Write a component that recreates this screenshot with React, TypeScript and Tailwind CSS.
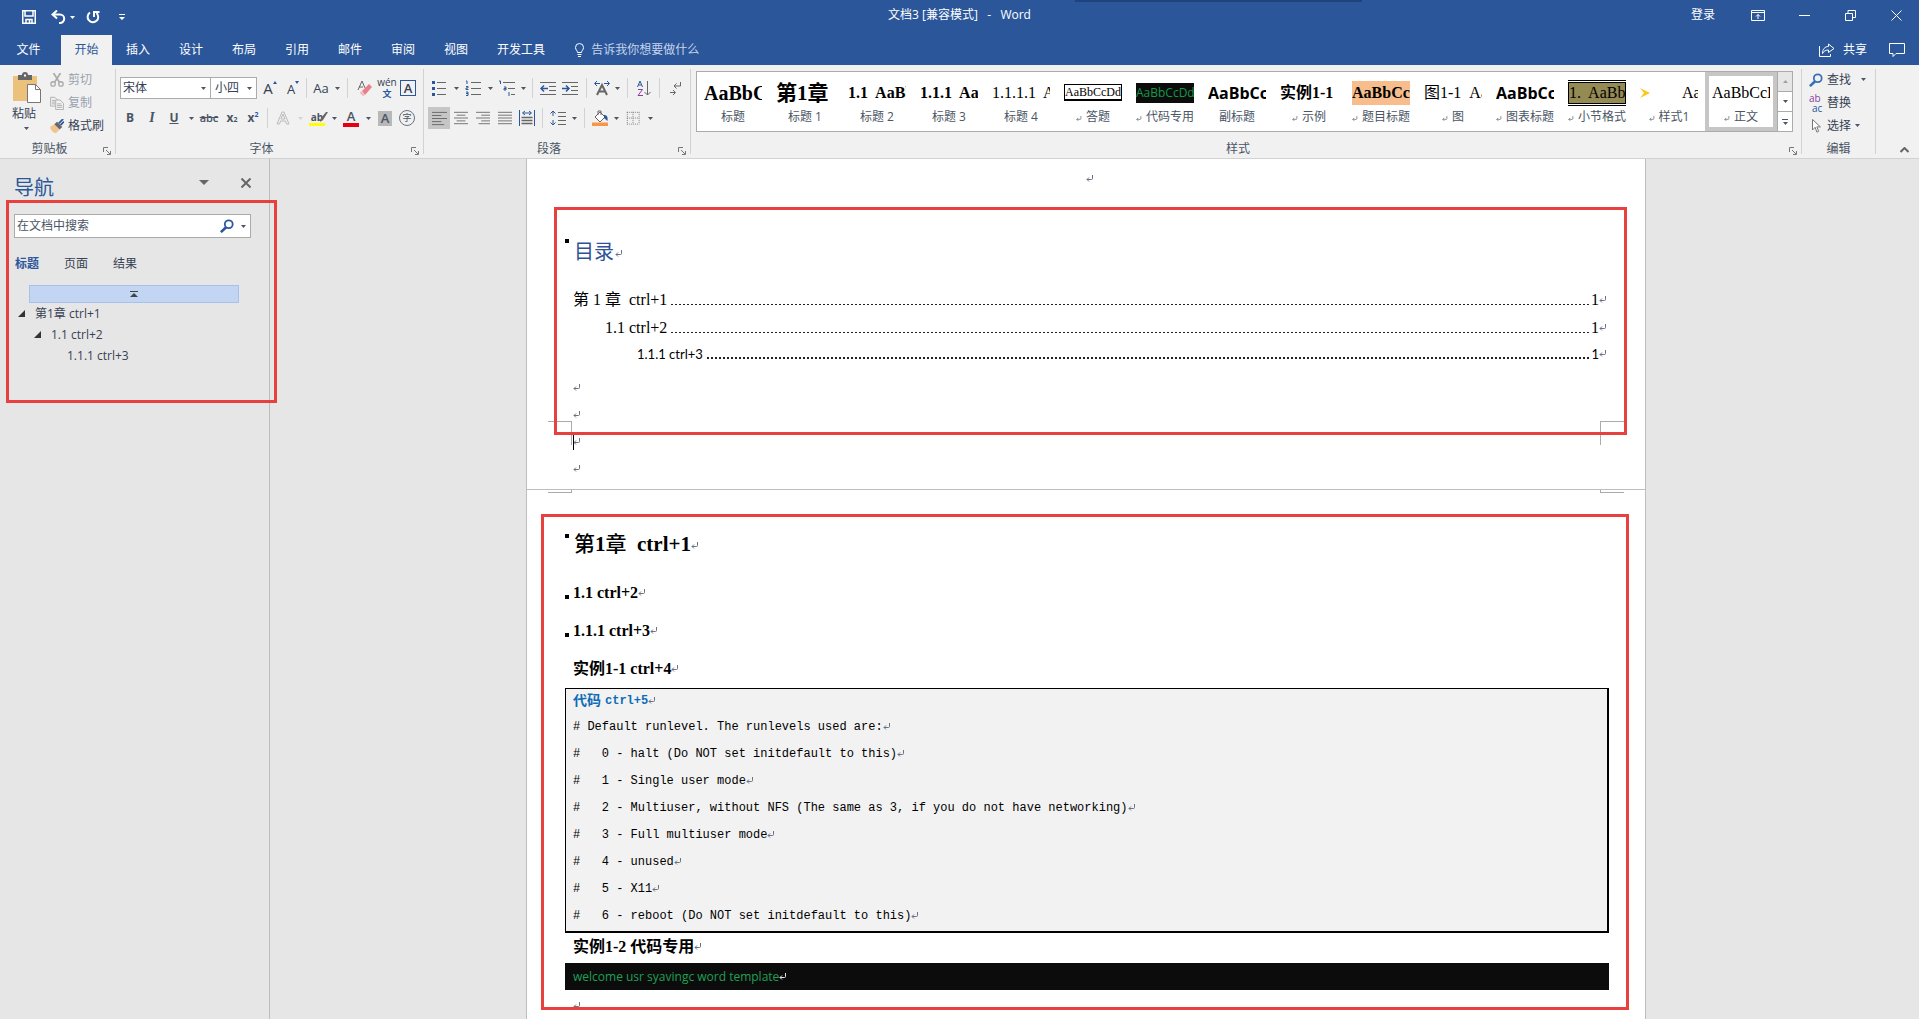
import type { ReactNode } from "react";

const TABS = ["插入", "设计", "布局", "引用", "邮件", "审阅", "视图", "开发工具"];

const CODE_LINES = [
  "# Default runlevel. The runlevels used are:",
  "#   0 - halt (Do NOT set initdefault to this)",
  "#   1 - Single user mode",
  "#   2 - Multiuser, without NFS (The same as 3, if you do not have networking)",
  "#   3 - Full multiuser mode",
  "#   4 - unused",
  "#   5 - X11",
  "#   6 - reboot (Do NOT set initdefault to this)",
];

const SERIF = "font-['Liberation_Serif','Noto_Sans_CJK_SC',serif]";
const SANS = "font-['Open_Sans','Noto_Sans_CJK_SC',sans-serif]";

const STYLES: { name: string; mark?: boolean; preview: ReactNode }[] = [
  { name: "标题", preview: <span className={`${SERIF} text-xl font-bold`}>AaBbCc</span> },
  { name: "标题 1", preview: <span className={`${SERIF} text-[21px] font-bold`}>第1章</span> },
  { name: "标题 2", preview: <span className={`${SERIF} text-base font-bold whitespace-pre`}>1.1  AaBb</span> },
  { name: "标题 3", preview: <span className={`${SERIF} text-base font-bold whitespace-pre`}>1.1.1  Aa</span> },
  { name: "标题 4", preview: <span className={`${SERIF} text-base whitespace-pre`}>1.1.1.1  Aa</span> },
  {
    name: "答题",
    mark: true,
    preview: <span className={`${SERIF} w-full overflow-hidden border border-b-2 border-black text-xs leading-[14px]`}>AaBbCcDdE</span>,
  },
  {
    name: "代码专用",
    mark: true,
    preview: <span className="w-full overflow-hidden bg-[#0c0c0c] text-xs leading-5 text-[#129a48]">AaBbCcDd</span>,
  },
  { name: "副标题", preview: <span className="text-base font-bold">AaBbCc</span> },
  { name: "示例", mark: true, preview: <span className={`${SERIF} text-base font-bold`}>实例1-1</span> },
  {
    name: "题目标题",
    mark: true,
    preview: <span className={`${SERIF} w-full overflow-hidden bg-[#f7bd8c] text-base leading-6 font-bold`}>AaBbCcD</span>,
  },
  { name: "图", mark: true, preview: <span className={`${SERIF} text-base whitespace-pre`}>图1-1  Aa</span> },
  { name: "图表标题", mark: true, preview: <span className="text-base font-bold">AaBbCcD</span> },
  {
    name: "小节格式",
    mark: true,
    preview: (
      <span className="flex w-full flex-col border-y border-black py-px">
        <span className={`${SERIF} overflow-hidden border border-black bg-[#948a54] text-base leading-5 whitespace-pre`}>1.  AaBb</span>
      </span>
    ),
  },
  {
    name: "样式1",
    mark: true,
    preview: (
      <span className={`${SERIF} flex w-full items-center text-base`}>
        <svg width="10" height="10" viewBox="0 0 10 10" className="mr-8 shrink-0">
          <path d="M0 0l10 5-10 5 4-5z" fill="#ffc61a" />
        </svg>
        Aa
      </span>
    ),
  },
  { name: "正文", mark: true, preview: <span className={`${SERIF} text-base`}>AaBbCcD</span> },
];

function Mark({ className = "text-gray-500" }: { className?: string }) {
  return (
    <svg width="8" height="8" viewBox="0 0 8 8" className={`inline-block shrink-0 ${className}`} fill="none" stroke="currentColor">
      <path d="M6.500 0v3.500a1 1 0 0 1-1 1H1M3 2.500l-2 2 2 2" />
    </svg>
  );
}

function Caret({ className = "text-gray-600" }: { className?: string }) {
  return (
    <svg width="5" height="3" viewBox="0 0 5 3" className={`shrink-0 ${className}`}>
      <path d="M0 0h5L2.5 3z" fill="currentColor" />
    </svg>
  );
}

function CaretButton({ label, className = "w-3" }: { label: string; className?: string }) {
  return (
    <button aria-label={label} className={`flex h-[22px] items-center justify-center ${className}`}>
      <Caret />
    </button>
  );
}

function Tool({ label, className = "w-[22px]", children }: { label: string; className?: string; children: ReactNode }) {
  return (
    <button aria-label={label} className={`flex h-[22px] shrink-0 items-center justify-center ${className}`}>
      {children}
    </button>
  );
}

function Icon({ children, size = 16 }: { children: ReactNode; size?: number }) {
  return (
    <svg width={size} height={size} viewBox="0 0 16 16" fill="none" stroke="#666" className="shrink-0">
      {children}
    </svg>
  );
}

function Sep({ className = "" }: { className?: string }) {
  return <div className={`h-5 w-px bg-[#d2d2d2] ${className}`} />;
}

function Group({ label, launcher = true, className = "", children }: { label: string; launcher?: boolean; className?: string; children: ReactNode }) {
  return (
    <>
      <section aria-label={label} className={`flex flex-col justify-between ${className}`}>
        <div className="min-w-0">{children}</div>
        <div className="flex h-[18px] items-center">
          <span className="flex-1 text-center text-gray-600">{label}</span>
          {launcher && (
            <button aria-label={`${label}设置`} className="flex w-4 justify-center pt-1">
              <svg width="8" height="8" viewBox="0 0 8 8" fill="none" stroke="#777">
                <path d="M.5 5V.5H5M3 3l4 4M7.500 4v3.500H4" />
              </svg>
            </button>
          )}
        </div>
      </section>
      <div className="my-1 w-px bg-[#d2d2d2]" />
    </>
  );
}

function TitleBar() {
  return (
    <div className="relative grid h-[30px] grid-cols-[1fr_auto_1fr] items-center text-white">
      <div className="absolute top-0 left-[56%] h-[2px] w-[15%] bg-[#1f437c]" />
      <div className="flex items-center pt-1 pl-[22px]">
        <button aria-label="保存">
          <svg width="14" height="14" viewBox="0 0 14 14" fill="none" stroke="white" strokeWidth="1.500">
            <path d="M.75.75h12.500v12.500H.75zM3 1v5h8V1M4 13V9.500h6V13M7.500 10v3" />
          </svg>
        </button>
        <button aria-label="撤消" className="ml-[15px]">
          <svg width="15" height="14" viewBox="0 0 15 14" fill="none" stroke="white" strokeWidth="2">
            <path d="M6 .5L1.500 4.500 6 8.500M2 4.500h7a4.200 4.200 0 0 1 0 8.400H8" />
          </svg>
        </button>
        <button aria-label="撤消选项" className="ml-1">
          <Caret className="text-white" />
        </button>
        <button aria-label="重复" className="ml-[11px]">
          <svg width="14" height="14" viewBox="0 0 14 14" fill="none" stroke="white" strokeWidth="2">
            <path d="M4 2.500A5.300 5.300 0 1 0 10.500 3M8 7V2h5.500" />
          </svg>
        </button>
        <button aria-label="自定义快速访问工具栏" className="ml-[19px]">
          <svg width="6" height="7" viewBox="0 0 6 7" fill="white">
            <path d="M0 0h6v1H0zM0 3h6L3 6z" />
          </svg>
        </button>
      </div>
      <h1 className="whitespace-pre">文档3 [兼容模式]   -   Word</h1>
      <div className="flex items-center justify-end pr-[17px]">
        <button>登录</button>
        <button aria-label="功能区显示选项" className="ml-9">
          <svg width="14" height="11" viewBox="0 0 14 11" fill="none" stroke="white">
            <path d="M.5.500h13v10H.5zM.5 2.500h13M7 9V4.500M5 6.500l2-2 2 2" />
          </svg>
        </button>
        <button aria-label="最小化" className="ml-[34px]">
          <svg width="11" height="11" viewBox="0 0 11 11" stroke="white">
            <path d="M0 5.500h11" />
          </svg>
        </button>
        <button aria-label="还原" className="ml-[35px]">
          <svg width="11" height="11" viewBox="0 0 11 11" fill="none" stroke="white">
            <path d="M.5 3.500h7v7h-7zM3 3.500V.5h7.500v7h-3" />
          </svg>
        </button>
        <button aria-label="关闭" className="ml-[35px]">
          <svg width="11" height="11" viewBox="0 0 11 11" fill="none" stroke="white">
            <path d="M.5.500l10 10M10.500.500l-10 10" />
          </svg>
        </button>
      </div>
    </div>
  );
}

function TabBar() {
  return (
    <nav className="flex h-[30px] items-stretch text-white">
      <button className="w-[61px] pr-1">文件</button>
      <button className="w-[51px] bg-[#f1f1f1] text-[#2b579a]">开始</button>
      {TABS.map((tab) => (
        <button key={tab} className="mr-px px-[14px]">
          {tab}
        </button>
      ))}
      <label className="ml-[15px] flex flex-1 items-center gap-[7px] text-[#c5d4ea]">
        <svg width="9" height="14" viewBox="0 0 9 14" fill="none" stroke="white">
          <path d="M2.500 9.500c0-2-2-2.500-2-5a4 4 0 0 1 8 0c0 2.500-2 3-2 5zM2.500 11.500h4M3 13.500h3" />
        </svg>
        <input placeholder="告诉我你想要做什么" className="w-48 bg-transparent outline-none placeholder:text-[#c5d4ea]" />
      </label>
      <button className="mr-[22px] flex items-center gap-2">
        <svg width="16" height="14" viewBox="0 0 16 14" fill="none" stroke="white">
          <path d="M.5 3v10.500h11V11M9.500 1l5.500 4.500-5.500 4V7C6.500 7 5 8 3.500 10.500 3.500 6 6 3.500 9.500 3.500z" />
        </svg>
        共享
      </button>
      <button aria-label="批注" className="mr-[14px]">
        <svg width="16" height="14" viewBox="0 0 16 14" fill="none" stroke="white">
          <path d="M.5.500h15v10H7l-3 3v-3H.5z" />
        </svg>
      </button>
    </nav>
  );
}

function ClipboardGroup() {
  return (
    <Group label="剪贴板" className="w-[115px]">
      <div className="flex pt-[3px] pl-3">
        <button className="mt-1 flex w-[30px] flex-col items-start">
          <svg width="30" height="31" viewBox="0 0 30 31" fill="none">
            <path d="M1 4h24v25H1z" fill="#ecc17b" />
            <path d="M6 3h4a3 3 0 0 1 6 0h4v5H6z" fill="#666" />
            <path d="M12 2.500h2v2h-2z" fill="white" />
            <path d="M15.500 12.500h8l5 5v13h-13z" fill="white" stroke="#777" />
            <path d="M23.500 12.500v5h5" stroke="#777" />
          </svg>
          <span className="mt-[3px] leading-4">粘贴</span>
          <span className="mt-[5px] ml-3">
            <Caret />
          </span>
        </button>
        <div className="ml-2 flex flex-col text-gray-400">
          <button className="flex h-[23px] items-center gap-1">
            <Icon size={14}>
              <path d="M4 0l7 11M12 0L5 11" stroke="#aaa" strokeWidth="2" />
              <circle cx="3.500" cy="12.500" r="2.500" stroke="#aaa" strokeWidth="1.500" />
              <circle cx="12.500" cy="12.500" r="2.500" stroke="#aaa" strokeWidth="1.500" />
            </Icon>
            剪切
          </button>
          <button className="flex h-[23px] items-center gap-1">
            <Icon size={14}>
              <path d="M.5 1.500h5l3 3v7h-8zM2 5h4M2 7h4M2 9h4" stroke="#aaa" />
              <path d="M6.500 4.500h5l4 4v7h-9z" fill="#f1f1f1" stroke="#aaa" />
              <path d="M8 9h5M8 11h6M8 13h6" stroke="#aaa" />
            </Icon>
            复制
          </button>
          <button className="flex h-[23px] items-center gap-1 text-gray-700">
            <Icon size={14}>
              <path d="M0 9l5-3 6 6-4 4c-3 0-6-3-7-7z" fill="#f0c48c" stroke="none" />
              <path d="M5 6l3-3 6 6-3 3z" fill="#666" stroke="none" />
              <path d="M10 5l5-5M12 7l4-4" stroke="#2b579a" strokeWidth="2" />
            </Icon>
            格式刷
          </button>
        </div>
      </div>
    </Group>
  );
}

function FontGroup() {
  return (
    <Group label="字体" className="w-[307px]">
      <div className="flex items-center pt-3 pl-1">
        <div className="relative">
          <select aria-label="字体名称" className="block h-[22px] w-[91px] appearance-none border border-[#ababab] bg-white pl-[2px]">
            <option>宋体</option>
          </select>
          <Caret className="pointer-events-none absolute top-[10px] right-[5px] text-gray-600" />
        </div>
        <div className="relative">
          <select aria-label="字号" className="block h-[22px] w-[46px] appearance-none border border-l-0 border-[#ababab] bg-white pl-1">
            <option>小四</option>
          </select>
          <Caret className="pointer-events-none absolute top-[10px] right-[5px] text-gray-600" />
        </div>
        <Tool label="增大字号" className="w-[26px]">
          <span className="text-[15px]">A</span>
          <svg width="4" height="3" viewBox="0 0 4 3" className="mb-3">
            <path d="M0 3h4L2 0z" fill="#2b579a" />
          </svg>
        </Tool>
        <Tool label="减小字号" className="w-5">
          <span className="pt-px text-[13px]">A</span>
          <svg width="4" height="3" viewBox="0 0 4 3" className="mb-3">
            <path d="M0 0h4L2 3z" fill="#2b579a" />
          </svg>
        </Tool>
        <Sep className="ml-[3px]" />
        <Tool label="更改大小写" className="ml-1 w-5">
          <span className="text-[13px]">Aa</span>
        </Tool>
        <CaretButton label="大小写选项" />
        <Sep className="ml-1" />
        <Tool label="清除格式" className="ml-1 w-6">
          <Icon>
            <path d="M2 10L6 1l3 7M3 7h4" />
            <path d="M6 11l7-7 3 3-7 8z" fill="#e8808c" stroke="none" />
            <path d="M5 11l4 4-2 1-3-3z" fill="#f3b4bb" stroke="none" />
          </Icon>
        </Tool>
        <Tool label="拼音指南" className="w-[22px] flex-col">
          <span className="text-[10px] leading-[11px]">wén</span>
          <span className="text-[9px] leading-[11px] font-bold text-[#2b579a]">文</span>
        </Tool>
        <Tool label="字符边框" className="w-5">
          <span className="h-4 w-4 border border-[#2b579a] text-[13px] leading-[14px] font-semibold">A</span>
        </Tool>
      </div>
      <div className="flex items-center pt-2 pl-[3px] font-bold text-gray-600">
        <Tool label="加粗">B</Tool>
        <Tool label="倾斜">
          <i className={`${SERIF} text-sm`}>I</i>
        </Tool>
        <Tool label="下划线">
          <u>U</u>
        </Tool>
        <CaretButton label="下划线选项" />
        <Tool label="删除线" className="w-6">
          <s className="text-[11px] font-semibold">abc</s>
        </Tool>
        <Tool label="下标">
          x<sub className="text-[7px]">2</sub>
        </Tool>
        <Tool label="上标" className="w-5">
          x<sup className="text-[7px] text-[#2b579a]">2</sup>
        </Tool>
        <Sep className="ml-1" />
        <Tool label="文本效果" className="ml-1 w-[22px]">
          <Icon>
            <path d="M2 14L7 2h2l5 12h-2.500l-1-3h-5l-1 3zM6 9h4L8 4z" stroke="#bbb" />
          </Icon>
        </Tool>
        <button aria-label="文本效果选项" className="flex w-3 justify-center">
          <Caret className="text-gray-300" />
        </button>
        <Tool label="突出显示" className="w-[22px] flex-col">
          <span className="relative text-[10px] leading-[12px]">
            ab
            <svg width="9" height="10" viewBox="0 0 9 10" className="absolute top-px left-2">
              <path d="M9 0L4 8 1 10l1-4L7 0z" fill="#666" />
            </svg>
          </span>
          <span className="h-[3px] w-4 bg-[#ffff00]" />
        </Tool>
        <CaretButton label="突出显示颜色" />
        <Tool label="字体颜色" className="w-[22px] flex-col">
          <span className="text-[13px] leading-[13px] font-semibold">A</span>
          <span className="h-1 w-4 bg-[#e60012]" />
        </Tool>
        <CaretButton label="字体颜色选项" />
        <Tool label="字符底纹">
          <span className="h-[15px] w-[14px] bg-[#b8b8b8] text-[13px] leading-[15px] font-semibold">A</span>
        </Tool>
        <Tool label="带圈字符">
          <span className="h-4 w-4 rounded-full border border-gray-500 text-[9px] leading-[14px] font-normal">字</span>
        </Tool>
      </div>
    </Group>
  );
}

function ParagraphGroup() {
  return (
    <Group label="段落" className="w-[266px]">
      <div className="flex items-center pt-3 pl-1">
        <Tool label="项目符号">
          <Icon>
            <path d="M6 2.500h9M6 8.500h9M6 14.500h9" />
            <path d="M1 1h3v3H1zM1 7h3v3H1zM1 13h3v3H1z" fill="#2b579a" stroke="none" />
          </Icon>
        </Tool>
        <CaretButton label="项目符号选项" />
        <Tool label="编号">
          <Icon>
            <path d="M6 2.500h10M6 8.500h10M6 14.500h10" />
            <path d="M1 1h1v3M1 6.500h2v1.500H1V9.500h2.500M1 12h2v3.500H1M1 13.500h2" stroke="#2b579a" />
          </Icon>
        </Tool>
        <CaretButton label="编号选项" />
        <Tool label="多级列表">
          <Icon>
            <path d="M4 2.500h12M9 8.500h7M12 14.500h4" />
            <path d="M0 1h1.500v3M5 7h2v3H5V8.500h2M10 12v4" stroke="#2b579a" />
          </Icon>
        </Tool>
        <CaretButton label="多级列表选项" className="w-[10px]" />
        <Sep className="ml-1" />
        <Tool label="减少缩进" className="ml-1 w-[22px]">
          <Icon>
            <path d="M0 2.500h16M9 6.500h7M9 10.500h7M0 14.500h16" />
            <path d="M8 8.500H1M4 5.500l-3 3 3 3" stroke="#2b579a" strokeWidth="1.500" />
          </Icon>
        </Tool>
        <Tool label="增加缩进">
          <Icon>
            <path d="M0 2.500h16M9 6.500h7M9 10.500h7M0 14.500h16" />
            <path d="M0 8.500h7M4 5.500l3 3-3 3" stroke="#2b579a" strokeWidth="1.500" />
          </Icon>
        </Tool>
        <Sep className="ml-[5px]" />
        <Tool label="中文版式" className="ml-1 w-[22px]">
          <Icon>
            <path d="M3 15L8 5l5 10M5 11.500h6" strokeWidth="2" />
            <path d="M6 3.500H1M3 1L.5 3.500 3 6M10 3.500h5M13 1l2.500 2.500L13 6" stroke="#2b579a" />
          </Icon>
        </Tool>
        <CaretButton label="中文版式选项" className="w-2" />
        <Sep className="ml-[6px]" />
        <Tool label="排序" className="ml-1 w-6">
          <Icon>
            <path d="M1.500 7L4 1l2.500 6M2.500 5h3" stroke="#2b579a" />
            <path d="M2 9.500h4.500L2 15.500h5" stroke="#8a3fa0" />
            <path d="M11.500 1v14M8.500 12l3 3 3-3" />
          </Icon>
        </Tool>
        <Sep className="ml-[3px]" />
        <Tool label="显示编辑标记" className="ml-1 w-[22px]">
          <Icon>
            <path d="M13.500 2v4H7M9.500 3.500L7 6l2.500 2.500M3 12.500h5M6 10l2.500 2.500L6 15" />
          </Icon>
        </Tool>
      </div>
      <div className="flex items-center pt-2 pl-1">
        <Tool label="左对齐" className="w-[22px] bg-[#c6c6c6]">
          <Icon size={15}>
            <path d="M0 1.500h16M0 4.800h10M0 8h16M0 11.300h10M0 14.500h13" />
          </Icon>
        </Tool>
        <Tool label="居中">
          <Icon size={14}>
            <path d="M0 1.500h16M3 4.800h10M0 8h16M3 11.300h10M0 14.500h16" />
          </Icon>
        </Tool>
        <Tool label="右对齐">
          <Icon size={14}>
            <path d="M0 1.500h16M6 4.800h10M0 8h16M6 11.300h10M3 14.500h13" />
          </Icon>
        </Tool>
        <Tool label="两端对齐">
          <Icon size={14}>
            <path d="M0 1.500h16M0 4.800h16M0 8h16M0 11.300h16M0 14.500h16" />
          </Icon>
        </Tool>
        <Tool label="分散对齐">
          <Icon>
            <path d="M.5 0v16M15.500 0v16M4 3h8M6 1L3.500 3 6 5M10 1l2.500 2L10 5" stroke="#2b579a" />
            <path d="M2.500 7.500h11M2.500 10.500h11M2.500 13.500h11" strokeWidth="1.500" />
          </Icon>
        </Tool>
        <Sep className="ml-1" />
        <Tool label="行距" className="ml-[3px] w-6">
          <Icon>
            <path d="M8 2.500h8M8 6.500h8M8 10.500h8M8 14.500h8" />
            <path d="M3 1v5M.5 3.500L3 1l2.500 2.500M3 15v-5M.5 12.500L3 15l2.500-2.500" stroke="#2b579a" />
          </Icon>
        </Tool>
        <CaretButton label="行距选项" className="w-2" />
        <Sep className="ml-[6px]" />
        <Tool label="底纹" className="ml-[3px] w-6">
          <Icon>
            <path d="M3 7l5-5 5 5-5 5zM6 5V1h3v4" fill="white" />
            <path d="M12 5c3 0 4 2 3.500 6L12 8z" fill="#2b579a" stroke="none" />
            <path d="M0 12.500h16V16H0z" fill="#f79646" stroke="none" />
          </Icon>
        </Tool>
        <CaretButton label="底纹颜色" className="w-2" />
        <Tool label="边框" className="w-[26px]">
          <Icon size={14}>
            <path d="M1 1.500h14M1 8h14M1 15h14M1.500 1v14M8 1v14M15 1v14" strokeDasharray="1 1.300" />
          </Icon>
        </Tool>
        <CaretButton label="边框选项" className="w-2" />
      </div>
    </Group>
  );
}

function StyleGallery() {
  return (
    <Group label="样式" className="min-w-0 flex-1">
      <div className="mt-[6px] mr-2 ml-[5px] flex h-[61px] border border-[#ababab] bg-white">
        <div className="flex min-w-0 flex-1 overflow-hidden">
          {STYLES.map((style) => (
            <button
              key={style.name}
              className={`flex w-[72px] shrink-0 flex-col items-center border-4 ${style.name === "正文" ? "border-[#c6c6c6]" : "border-transparent"}`}
            >
              <span className="flex h-[33px] w-[58px] items-center overflow-hidden text-left whitespace-nowrap text-black">{style.preview}</span>
              <span className="flex items-center gap-1 leading-4 whitespace-nowrap text-gray-600">
                {style.mark && <Mark className="mt-1 w-[6px] text-gray-500" />}
                {style.name}
              </span>
            </button>
          ))}
        </div>
        <div className="flex w-[15px] flex-col border-l border-[#ababab]">
          <button aria-label="上一行" className="flex flex-1 items-center justify-center bg-[#e6e6e6]">
            <Caret className="rotate-180 text-gray-400" />
          </button>
          <button aria-label="下一行" className="flex flex-1 items-center justify-center border-y border-[#ababab]">
            <Caret />
          </button>
          <button aria-label="其他样式" className="flex flex-1 flex-col items-center justify-center gap-[2px]">
            <span className="h-px w-[6px] bg-gray-600" />
            <Caret />
          </button>
        </div>
      </div>
    </Group>
  );
}

function EditingGroup() {
  return (
    <Group label="编辑" launcher={false} className="w-[73px]">
      <div className="flex flex-col pt-[3px] pl-[7px]">
        <button className="flex h-[23px] items-center gap-1">
          <Icon size={14}>
            <circle cx="10" cy="6" r="4.500" stroke="#3a6fb7" strokeWidth="2" />
            <path d="M7 9.500L1 15" stroke="#3a6fb7" strokeWidth="3" />
          </Icon>
          查找
          <span className="ml-[6px]">
            <Caret />
          </span>
        </button>
        <button className="flex h-[23px] items-center gap-1">
          <span className="flex w-[14px] flex-col text-left text-[10px] leading-[10px] text-[#8a3fa0]">
            <span>ab</span>
            <span className="pl-[3px] text-[#2b579a]">ac</span>
          </span>
          替换
        </button>
        <button className="flex h-[23px] items-center gap-1">
          <Icon size={14}>
            <path d="M4 .5v12l3-3 2 5.500 2-1-2-5h4z" fill="white" />
          </Icon>
          选择
          <Caret />
        </button>
      </div>
    </Group>
  );
}

function Ribbon() {
  return (
    <div className="flex h-[94px] border-b border-[#d2d2d2] bg-[#f1f1f1] text-gray-700">
      <ClipboardGroup />
      <FontGroup />
      <ParagraphGroup />
      <StyleGallery />
      <EditingGroup />
      <button aria-label="折叠功能区" className="flex w-[43px] items-end justify-end pr-[10px] pb-[5px]">
        <svg width="9" height="6" viewBox="0 0 9 6" fill="none" stroke="#666" strokeWidth="2">
          <path d="M.5 5l4-4 4 4" />
        </svg>
      </button>
    </div>
  );
}

function NavPane() {
  return (
    <aside className="relative w-[270px] shrink-0 border-r border-[#bdbdbd] pl-[14px] text-gray-700">
      <div className="flex h-[55px] items-center pr-[18px]">
        <h2 className="flex-1 pt-[2px] text-xl text-[#2b579a]">导航</h2>
        <button aria-label="任务窗格选项" className="mb-2">
          <svg width="10" height="5" viewBox="0 0 10 5">
            <path d="M0 0h10L5 5z" fill="#666" />
          </svg>
        </button>
        <button aria-label="关闭导航" className="mb-2 ml-8">
          <svg width="10" height="10" viewBox="0 0 10 10" stroke="#666" strokeWidth="2">
            <path d="M.5.500l9 9M9.500.500l-9 9" />
          </svg>
        </button>
      </div>
      <label className="mr-[18px] flex h-6 items-center border border-[#ababab] bg-white px-[2px]">
        <input placeholder="在文档中搜索" className="min-w-0 flex-1 outline-none placeholder:text-gray-600" />
        <Icon size={14}>
          <circle cx="10" cy="6" r="4.500" stroke="#2b579a" strokeWidth="2" />
          <path d="M7 9.500L1 15" stroke="#2b579a" strokeWidth="3" />
        </Icon>
        <Caret className="mr-[2px] ml-[7px] text-gray-600" />
      </label>
      <div className="flex h-[47px] items-center gap-[25px] pt-1 pl-px">
        <button className="font-bold text-[#2b579a]">标题</button>
        <button>页面</button>
        <button>结果</button>
      </div>
      <button aria-label="跳转到开头" className="ml-[15px] flex h-[18px] w-[210px] items-center justify-center border border-[#a9c1ea] bg-[#c2d5f2]">
        <svg width="8" height="7" viewBox="0 0 8 7" fill="#444">
          <path d="M0 0h8v1H0zM0 6h8L4 2z" />
        </svg>
      </button>
      <ul className="pl-1 leading-[21px]">
        <TreeItem text="第1章 ctrl+1" open />
        <TreeItem text="1.1 ctrl+2" open className="pl-4" />
        <TreeItem text="1.1.1 ctrl+3" className="pl-8" />
      </ul>
      <div className="absolute top-[41px] right-[-8px] left-[6px] h-[203px] border-3 border-[#e8403f]" />
    </aside>
  );
}

function TreeItem({ text, open = false, className = "" }: { text: string; open?: boolean; className?: string }) {
  return (
    <li className={`flex items-center gap-[10px] ${className}`}>
      <svg width="7" height="7" viewBox="0 0 7 7">
        {open && <path d="M7 0v7H0z" fill="#333" />}
      </svg>
      <a href="#doc">{text}</a>
    </li>
  );
}

function Bullet({ className }: { className: string }) {
  return <span className={`absolute -left-2 size-1 bg-black ${className}`} />;
}

function TocLine({ text, leader = "h-px", className = "" }: { text: string; leader?: string; className?: string }) {
  return (
    <li>
      <a href="#doc" className={`flex items-center whitespace-pre ${className}`}>
        {text}
        <span className={`mt-2 mr-[2px] ml-1 flex-1 bg-[repeating-linear-gradient(90deg,#222_0_2px,transparent_2px_4px)] ${leader}`} />
        1
        <Mark className="-mr-2 text-gray-500" />
      </a>
    </li>
  );
}

function TocPage() {
  return (
    <section className={`${SERIF} relative border-b border-[#bdbdbd] px-[46px] pt-3 pb-[7px] text-black`}>
      <div className="flex h-4 items-center justify-center pl-2">
        <Mark />
      </div>
      <h2 className="relative mt-12 flex h-[34px] items-center gap-px pl-px text-xl text-[#2f5496]">
        <Bullet className="top-1" />
        目录
        <Mark className="mt-1 text-gray-500" />
      </h2>
      <ul className="mt-[17px]">
        <TocLine text="第 1 章  ctrl+1" className="h-7 text-base" />
        <TocLine text="1.1 ctrl+2" className="h-7 pl-8 text-base" />
        <TocLine text="1.1.1 ctrl+3" leader="h-[2px]" className="h-6 pl-16 font-['Lato',sans-serif] text-[13px]" />
      </ul>
      <div className="pt-2">
        {[0, 1, 2, 3].map((line) => (
          <p key={line} className={`flex h-[27px] items-center ${line === 2 ? "relative" : ""}`}>
            {line === 2 && <span className="absolute top-1 left-0 h-[18px] w-px bg-black" />}
            <Mark />
          </p>
        ))}
      </div>
      <div className="absolute bottom-[44px] left-[21px] size-6 border-t border-r border-[#ababab]" />
      <div className="absolute right-[21px] bottom-[44px] size-6 border-t border-l border-[#ababab]" />
      <div className="absolute top-12 right-[18px] left-[27px] h-[228px] border-3 border-[#e8403f]" />
    </section>
  );
}

function ChapterPage() {
  return (
    <section className={`${SERIF} relative px-[46px] pt-[38px] font-bold text-black`}>
      <h2 className="relative flex h-8 items-center pl-px text-[21px] whitespace-pre">
        <Bullet className="top-[6px]" />
        <span className="font-medium">第</span>1<span className="font-medium">章</span>  ctrl+1
        <Mark className="mt-1 text-gray-500" />
      </h2>
      <h3 className="relative mt-[19px] flex h-7 items-center text-base">
        <Bullet className="top-4" />
        1.1 ctrl+2
        <Mark />
      </h3>
      <h4 className="relative mt-[10px] flex h-7 items-center text-base">
        <Bullet className="top-4" />
        1.1.1 ctrl+3
        <Mark />
      </h4>
      <h5 className="mt-[10px] flex h-7 items-center text-base">
        实例1-1 ctrl+4
        <Mark />
      </h5>
      <div className="mt-[5px] -mr-[10px] -ml-2 border border-r-2 border-b-2 border-black bg-[#f2f2f2] pb-[2px] pl-[7px] font-['Liberation_Mono','Noto_Sans_CJK_SC',monospace] text-xs font-normal">
        <p className="flex h-6 items-center font-bold text-[#0f6cb6]">
          <span className="text-sm">代码</span>
          <span className="ml-1">ctrl+5</span>
          <Mark />
        </p>
        {CODE_LINES.map((line) => (
          <p key={line} className="flex h-[27px] items-center whitespace-pre">
            {line}
            <Mark />
          </p>
        ))}
      </div>
      <h5 className="flex h-7 items-center text-base">
        实例1-2 代码专用
        <Mark />
      </h5>
      <p className={`${SANS} mt-[2px] -mr-[10px] -ml-2 flex h-[27px] items-center bg-[#0c0c0c] pl-2 text-xs font-normal text-[#1fa055]`}>
        welcome usr syavingc word template
        <Mark className="text-gray-200" />
      </p>
      <p className="flex h-8 items-center">
        <Mark />
      </p>
      <div className="absolute top-0 left-[21px] h-[3px] w-6 border-r border-b border-[#ababab]" />
      <div className="absolute top-0 right-[21px] h-[3px] w-6 border-b border-l border-[#ababab]" />
      <div className="absolute top-6 right-4 left-[14px] h-[496px] border-3 border-[#e8403f]" />
    </section>
  );
}

export default function App() {
  return (
    <div className={`${SANS} flex h-screen flex-col overflow-hidden bg-[#e6e6e6] text-xs leading-4`}>
      <header className="bg-[#2b579a]">
        <TitleBar />
        <div className="pt-[5px]">
          <TabBar />
        </div>
      </header>
      <Ribbon />
      <div className="flex min-h-0 flex-1">
        <NavPane />
        <main id="doc" className="min-w-0 flex-1 overflow-hidden pr-[17px]">
          <article className="mx-auto min-h-full max-w-[1120px] border-x border-[#bdbdbd] bg-white">
            <TocPage />
            <ChapterPage />
          </article>
        </main>
      </div>
    </div>
  );
}
